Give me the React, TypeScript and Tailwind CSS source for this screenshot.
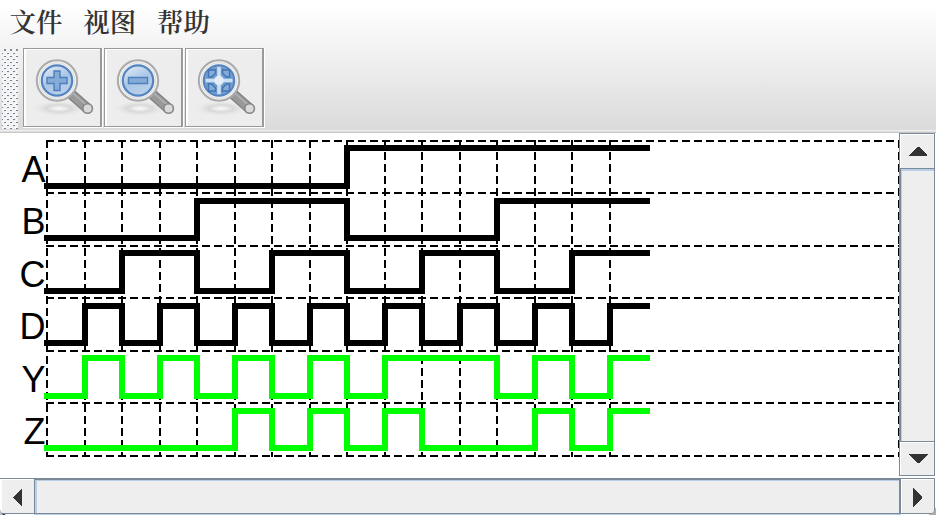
import React from "react";

const cols = [47, 85, 122, 160, 197, 235, 272, 310, 347, 385, 422, 460, 497, 535, 572, 610, 647];
const rules = [141, 193, 246, 298, 351, 403, 456];

const signals = [
  { name: "A", bits: "0000000011111111", hi: 148, lo: 186, base: 182, color: "#000" },
  { name: "B", bits: "0000111100001111", hi: 201, lo: 238, base: 234, color: "#000" },
  { name: "C", bits: "0011001100110011", hi: 253, lo: 291, base: 287, color: "#000" },
  { name: "D", bits: "0101010101010101", hi: 306, lo: 343, base: 339, color: "#000" },
  { name: "Y", bits: "0101010101110101", hi: 358, lo: 396, base: 392, color: "#00ff00" },
  { name: "Z", bits: "0000010101000101", hi: 411, lo: 448, base: 444, color: "#00ff00" },
];

function wave(bits: string, hi: number, lo: number) {
  return bits
    .split("")
    .map((b, i) => {
      const y = b === "1" ? hi : lo;
      return `${i ? "L" : "M"}${cols[i]} ${y}L${cols[i + 1]} ${y}`;
    })
    .join("");
}

type Kind = "plus" | "minus" | "fit";

function Magnifier({ kind }: { kind: Kind }) {
  return (
    <svg width="76" height="76" viewBox="-1 1 76 76" className="block">
      <defs>
        <linearGradient id={`lens-${kind}`} x1="0.2" y1="0" x2="0.7" y2="1">
          <stop offset="0" stopColor="#e0eaf6" />
          <stop offset="0.5" stopColor="#a9c5e6" />
          <stop offset="1" stopColor="#bdd2eb" />
        </linearGradient>
        <radialGradient id={`shade-${kind}`}>
          <stop offset="0" stopColor="#fafafa" />
          <stop offset="0.2" stopColor="#ececec" />
          <stop offset="0.45" stopColor="#d8d8d8" />
          <stop offset="1" stopColor="#ededed" stopOpacity="0" />
        </radialGradient>
      </defs>
      <ellipse cx="34" cy="59.500" rx="28" ry="8" fill={`url(#shade-${kind})`} />
      <path d="M46 45L62.500 59.500" stroke="#808080" strokeWidth="10.500" />
      <path d="M46 45L61.500 58.700" stroke="#999" strokeWidth="8" />
      <path d="M47 43.500L62.500 57" stroke="#b4b4b4" strokeWidth="1.500" />
      <circle cx="62.600" cy="59.500" r="4.800" fill="#dadada" stroke="#868686" strokeWidth="1.600" />
      <circle cx="32" cy="31.500" r="20.200" fill="#f3f3f3" stroke="#aaa" strokeWidth="2" />
      <circle cx="32" cy="31.500" r="17.700" fill="none" stroke="#dcdcdc" strokeWidth="1" />
      <circle cx="32" cy="31.500" r="15.200" fill={`url(#lens-${kind})`} stroke="#5484c0" strokeWidth="2.200" />
      {kind === "plus" && (
        <path d="M29 22h6v6.500h7v6h-7v7h-6v-7h-7v-6h7z" fill="#86abd7" stroke="#4f7fbb" strokeWidth="1.400" />
      )}
      {kind === "minus" && <path d="M22.500 28.500h19v6h-19z" fill="#86abd7" stroke="#4f7fbb" strokeWidth="1.400" />}
      {kind === "fit" && (
        <g>
          <circle cx="32" cy="31.500" r="14.200" fill="#6e9bcf" />
          <path d="M32 18v27M18.500 31.500h27" stroke="#cfdff2" strokeWidth="3.600" />
          <circle cx="32" cy="31.500" r="4.800" fill="#e3edf8" />
          <path
            d="M21.500 28v-7h7v3l-4 4zM42.500 28v-7h-7v3l4 4zM21.500 35v7h7v-3l-4-4zM42.500 35v7h-7v-3l4-4z"
            fill="#86abd9"
            stroke="#4273b3"
            strokeWidth="1.400"
          />
        </g>
      )}
    </svg>
  );
}

function ToolButton({ kind }: { kind: Kind }) {
  return (
    <button className="h-[80px] w-[80px] shrink-0 border-r border-b border-white">
      <span className="block h-[79px] w-[79px] border-y border-l border-r-2 border-[#999] bg-[#ededed]">
        <span className="block h-[77px] w-[76px] border-t border-l-2 border-white">
          <span className="-ml-[2px] block">
            <Magnifier kind={kind} />
          </span>
        </span>
      </span>
    </button>
  );
}

function Gripper() {
  return (
    <svg width="16" height="81" className="ml-[2px] block" shapeRendering="crispEdges">
      <defs>
        <pattern id="grip" width="6" height="6" patternUnits="userSpaceOnUse">
          <path d="M1 1h2v1h-2zM4 4h2v1h-2z" fill="#fff" />
          <path d="M2 2h2v1h-2zM5 5h1v1h-1zM0 5h1v1h-1z" fill="#6b839b" />
        </pattern>
      </defs>
      <rect width="16" height="81" fill="#f3f3f3" />
      <rect y="3" width="16" height="78" fill="url(#grip)" />
      <path d="M2 1h2v2h-2zM8 1h2v2h-2zM14 1h2v2h-2z" fill="#7b8fa3" />
    </svg>
  );
}

function Arrow({ d, className }: { d: string; className: string }) {
  return (
    <div className={`shrink-0 overflow-hidden bg-[#eee] ${className}`}>
      <svg width="34" height="34" viewBox="0 0 34 34" className="block">
        <path d={d} fill="#333" shapeRendering="crispEdges" />
      </svg>
    </div>
  );
}

export default function App() {
  return (
    <div className="relative flex h-[515px] w-[936px] flex-col overflow-hidden bg-white">
      <header className="h-[133px] shrink-0 border-b border-[#c8c8c8] bg-linear-to-b from-white from-5% to-[#dadada]">
        <nav className="flex h-[48px] gap-[21px] pl-[9.5px] pt-[3px] font-['Noto_Serif_CJK_SC','Noto_Sans_CJK_SC',serif] text-[26.4px] leading-[36px] font-semibold text-[#333]">
          <span>文件</span>
          <span>视图</span>
          <span>帮助</span>
        </nav>
        <div className="flex h-[81px]">
          <Gripper />
          <div className="ml-[5px] flex gap-px">
            <ToolButton kind="plus" />
            <ToolButton kind="minus" />
            <ToolButton kind="fit" />
          </div>
        </div>
        <div className="mt-px h-[2px] border-b border-[#dedede] bg-[#eee]" />
      </header>
      <div className="flex h-[345px] shrink-0">
        <svg width="899" height="345" viewBox="0 133 899 345" shapeRendering="crispEdges" className="block shrink-0">
          <g stroke="#000" strokeWidth="2" strokeDasharray="8 4">
            {rules.map((y) => (
              <path key={y} d={`M46 ${y}H900`} />
            ))}
            {[...cols.slice(0, 16), 899].map((x) => (
              <path key={x} d={`M${x} 140V457`} />
            ))}
          </g>
          {signals.map((s) => (
            <g key={s.name}>
              <text
                x="45.5"
                y={s.base}
                textAnchor="end"
                fontSize="36"
                className="font-['Liberation_Sans',Arial,sans-serif]"
              >
                {s.name}
              </text>
              <path
                d={wave(s.bits, s.hi, s.lo)}
                fill="none"
                stroke={s.color}
                strokeWidth="6"
                strokeLinecap="square"
                strokeLinejoin="miter"
              />
            </g>
          ))}
        </svg>
        <div className="flex h-[343px] w-[36px] flex-col border border-[#7a8a99] bg-[#eee]">
          <Arrow className="h-[34px] border-t border-l border-white" d="M8 21V20L16 12H18L26 20V21z" />
          <div className="grow border-t border-b border-l border-[#7a8a99] bg-[#eee]">
            <div className="h-full border-t-2 border-l border-[#b8cfe5]" />
          </div>
          <Arrow className="h-[33px] border-t border-l border-white" d="M7 11H27L18 20H16z" />
        </div>
      </div>
      <div className="flex h-[36px] w-[935px] shrink-0 border-t border-r border-b border-[#7a8a99] bg-[#eee]">
        <Arrow className="w-[34px] border-t border-l-2 border-white" d="M20 8V27L11 18V17z" />
        <div className="grow border-t border-r-2 border-l border-[#7a8a99]">
          <div className="h-full border-t border-l-2 border-[#b8cfe5]" />
        </div>
        <Arrow className="w-[33px] border-t border-l border-white" d="M11 8V27L20 18V17z" />
      </div>
      <div className="mr-[35px] ml-[34px] h-px shrink-0 bg-[#b8cfe5]" />
      <svg width="8" height="6" viewBox="0 0 8 6" className="absolute bottom-0 left-0">
        <path d="M0 0Q1 4 6 6H0z" fill="#bbb" />
        <path d="M2 4L6 6H3z" fill="#22227a" />
      </svg>
      <svg width="9" height="8" viewBox="0 0 9 8" className="absolute right-0 bottom-0">
        <path d="M9 0Q7 6 1 8H9z" fill="#aaa" />
      </svg>
    </div>
  );
}
